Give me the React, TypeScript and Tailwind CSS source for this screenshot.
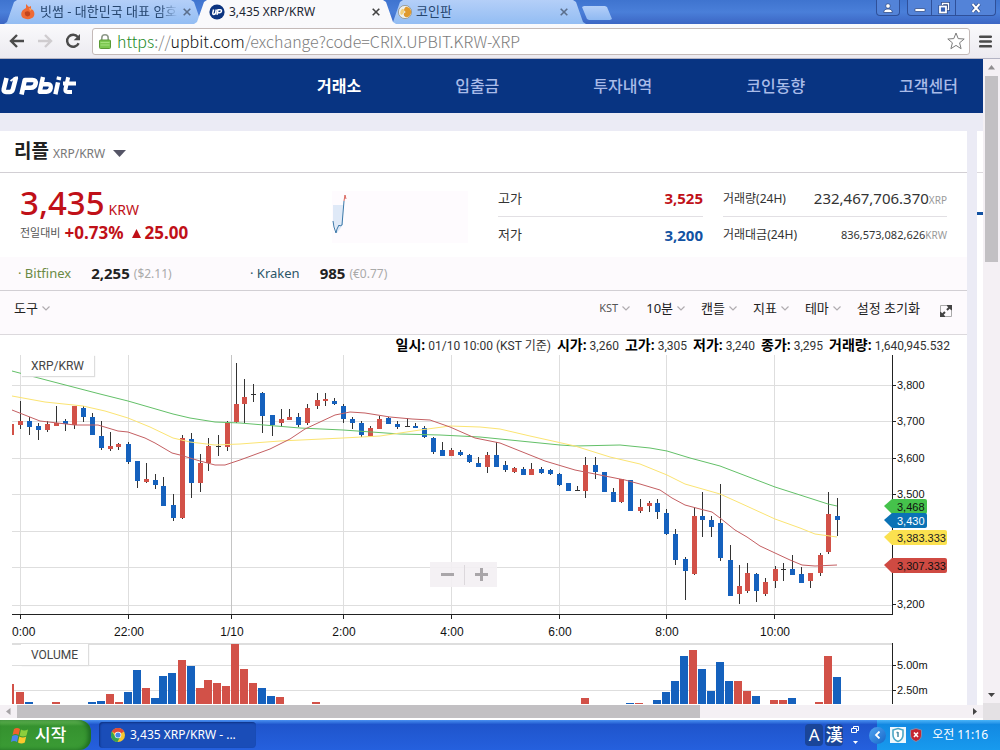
import React from "react";

type Candle = [x: number, high: number, low: number, top: number, bottom: number, kind: "r" | "b" | "d"];

const RED = "#d25148";
const BLUE = "#1561bd";

const candles: Candle[] = [
  [20, 401, 429, 421, 425, "r"], [29, 417, 435, 421, 427, "b"], [38, 423, 440, 426, 430, "b"],
  [47, 421, 432, 424, 430, "r"], [56, 406, 426, 423, 426, "r"], [65, 419, 431, 421, 424, "b"],
  [74, 406, 429, 406, 425, "r"], [83, 406, 422, 408, 417, "b"], [92, 413, 435, 417, 435, "b"],
  [101, 421, 450, 436, 448, "b"], [110, 432, 451, 446, 449, "r"], [118, 443, 450, 444, 447, "r"],
  [128, 442, 464, 444, 462, "b"], [137, 461, 488, 461, 481, "b"], [146, 463, 483, 479, 482, "r"],
  [155, 474, 489, 480, 485, "b"], [163, 477, 506, 486, 506, "b"], [173, 494, 521, 505, 518, "b"],
  [182, 435, 519, 438, 518, "r"], [191, 433, 498, 439, 483, "b"], [200, 454, 492, 463, 483, "r"],
  [208, 438, 471, 446, 463, "r"], [218, 435, 456, 446, 447, "d"], [227, 421, 451, 423, 447, "r"],
  [236, 363, 423, 404, 422, "r"], [244, 379, 423, 397, 404, "r"], [253, 384, 402, 394, 395, "d"],
  [262, 392, 433, 393, 416, "b"], [272, 415, 436, 415, 425, "b"], [281, 409, 427, 419, 423, "r"],
  [289, 409, 420, 417, 420, "r"], [298, 413, 427, 417, 425, "b"], [307, 404, 425, 408, 423, "r"],
  [317, 393, 409, 400, 406, "r"], [325, 393, 406, 399, 401, "r"], [334, 398, 405, 401, 404, "b"],
  [343, 404, 423, 406, 419, "b"], [352, 417, 429, 419, 423, "b"], [361, 421, 437, 423, 435, "b"],
  [370, 426, 436, 428, 436, "r"], [379, 416, 429, 419, 429, "r"], [388, 417, 424, 418, 424, "b"],
  [397, 421, 429, 424, 427, "b"], [407, 418, 427, 426, 427, "d"], [415, 423, 428, 426, 428, "b"],
  [424, 426, 438, 428, 437, "b"], [433, 437, 454, 438, 452, "b"], [442, 442, 456, 450, 456, "b"],
  [451, 448, 456, 450, 456, "r"], [460, 450, 456, 452, 455, "b"], [469, 454, 463, 455, 462, "b"],
  [478, 457, 467, 463, 467, "b"], [487, 452, 473, 455, 467, "r"], [496, 442, 467, 455, 467, "b"],
  [505, 461, 472, 465, 470, "b"], [514, 467, 473, 468, 472, "r"], [523, 467, 475, 469, 475, "b"],
  [531, 463, 475, 469, 475, "r"], [541, 467, 474, 469, 473, "b"], [550, 469, 475, 470, 474, "b"],
  [559, 473, 486, 474, 485, "b"], [568, 483, 491, 483, 491, "b"], [577, 486, 491, 490, 491, "d"],
  [585, 457, 498, 465, 491, "r"], [595, 457, 479, 465, 472, "b"], [604, 472, 492, 472, 492, "b"],
  [613, 488, 502, 492, 502, "b"], [621, 479, 503, 479, 502, "r"], [630, 480, 511, 480, 511, "b"],
  [640, 499, 513, 507, 511, "r"], [649, 501, 512, 503, 506, "r"], [657, 499, 519, 503, 512, "b"],
  [666, 509, 535, 513, 534, "b"], [675, 529, 565, 534, 560, "b"], [685, 557, 600, 559, 571, "b"],
  [694, 507, 575, 516, 574, "r"], [702, 492, 537, 516, 520, "b"], [711, 516, 537, 520, 527, "b"],
  [720, 484, 561, 523, 558, "b"], [730, 545, 596, 560, 596, "b"], [739, 565, 604, 586, 594, "r"],
  [747, 563, 593, 573, 591, "r"], [756, 573, 602, 574, 591, "b"], [765, 578, 596, 582, 594, "r"],
  [775, 566, 588, 569, 581, "r"], [783, 563, 581, 569, 570, "d"], [792, 555, 575, 569, 575, "b"],
  [801, 567, 583, 574, 583, "b"], [810, 573, 588, 573, 581, "r"], [820, 553, 576, 555, 573, "r"],
  [828, 492, 554, 514, 552, "r"], [837, 498, 536, 516, 520, "b"],
];

const volumes: [x: number, top: number, kind: "r" | "b"][] = [
  [16, 692, "r"], [25, 702, "b"], [52, 702, "r"], [88, 702, "b"], [97, 701, "b"], [106, 694, "r"],
  [115, 702, "r"], [124, 692, "b"], [133, 670, "b"], [142, 688, "r"], [151, 698, "b"], [159, 676, "b"],
  [168, 673, "b"], [178, 660, "r"], [187, 666, "b"], [196, 688, "r"], [204, 680, "r"], [213, 683, "r"],
  [222, 686, "r"], [231, 644, "r"], [240, 669, "r"], [249, 683, "r"], [258, 688, "b"], [267, 696, "b"],
  [276, 697, "r"], [312, 702, "r"], [581, 698, "r"], [626, 703, "b"], [635, 703, "r"], [653, 700, "b"],
  [662, 692, "b"], [671, 681, "b"], [680, 656, "b"], [689, 650, "r"], [698, 669, "b"], [707, 691, "b"],
  [716, 662, "b"], [725, 681, "b"], [734, 681, "r"], [743, 691, "r"], [752, 696, "b"], [770, 700, "r"],
  [779, 700, "r"], [788, 698, "b"], [815, 702, "r"], [824, 656, "r"], [833, 677, "b"],
];

const GREEN_LINE = "12,371 50,381 100,394 128,401 173,414 190,418 215,422 240,423 300,428 343,430 400,434 440,435 480,437 520,441 560,445 575,446 620,445 650,448 667,451 690,458 720,466 775,487 800,495 828,504 837,506";
const YELLOW_LINE = "12,396 45,402 83,406 105,411 128,418 150,427 173,438 190,442 215,445 240,444 280,441 343,438 380,436 420,430 450,426 480,427 500,429 530,436 575,446 610,457 640,464 667,475 685,484 720,494 740,503 775,519 800,528 815,534 837,537";
const RED_LINE = "12,410 40,421 75,425 98,425 118,431 128,432 145,438 155,443 172,453 180,455 200,461 215,465 225,465 240,460 270,449 290,439 305,429 320,422 335,415 350,412 365,413 390,417 412,419 430,420 450,427 475,438 500,443 520,451 545,461 575,470 600,475 625,480 640,484 660,490 672,498 685,505 700,509 712,512 720,518 735,530 747,537 760,546 775,553 790,560 802,565 815,566 837,565";

const timeTicks: [number, string][] = [
  [20, "0:00"], [128, "22:00"], [231, "1/10"], [343, "2:00"], [451, "4:00"], [559, "6:00"], [666, "8:00"], [774, "10:00"],
];
const priceTicks: [number, string][] = [
  [385, "3,800"], [421, "3,700"], [458, "3,600"], [494, "3,500"], [604, "3,200"],
];
const priceTags: { y: number; w: number; fill: string; color: string; text: string }[] = [
  { y: 499, w: 32, fill: "#45c24b", color: "#111", text: "3,468" },
  { y: 513, w: 32, fill: "#0b72b5", color: "#fff", text: "3,430" },
  { y: 530, w: 52, fill: "#fbe14f", color: "#222", text: "3,383.333" },
  { y: 558, w: 52, fill: "#cf4a42", color: "#111", text: "3,307.333" },
];

function Chart() {
  const sans = '"Liberation Sans", Arial, sans-serif';
  return (
    <svg viewBox="0 355 967 351" className="block w-full" role="img" aria-label="XRP/KRW">
      <g stroke="#dedede" shapeRendering="crispEdges">
        {[385, 421, 458, 494, 531, 567, 605].map((y) => (
          <line key={y} x1={12} x2={892} y1={y + 0.5} y2={y + 0.5} />
        ))}
        {timeTicks.map(([x]) => (
          <line key={x} x1={x + 0.5} x2={x + 0.5} y1={355} y2={614} stroke={x === 231 ? "#c4c4c4" : "#dedede"} />
        ))}
        <line x1={12} x2={892} y1={643.5} y2={643.5} strokeWidth={2} />
        <line x1={12} x2={892} y1={665.5} y2={665.5} />
        <line x1={12} x2={892} y1={690.5} y2={690.5} />
      </g>

      <g shapeRendering="crispEdges">
        <rect x={12} y={424} width={2} height={11} fill={RED} />
        {candles.map(([x, high, low, top, bottom, kind]) => (
          <g key={x}>
            <rect x={x} y={high} width={1} height={low - high} fill="#333" />
            <rect
              x={x - 2}
              y={top}
              width={5}
              height={Math.max(1, bottom - top)}
              fill={kind === "r" ? RED : kind === "b" ? BLUE : "#333"}
            />
          </g>
        ))}
        <rect x={12} y={684} width={2} height={20} fill={RED} />
        {volumes.map(([x, top, kind]) => (
          <rect key={x} x={x} y={top} width={8} height={704 - top} fill={kind === "r" ? RED : BLUE} />
        ))}
      </g>

      <g fill="none" strokeWidth={1} strokeLinejoin="round">
        <polyline points={GREEN_LINE} stroke="#63c068" />
        <polyline points={YELLOW_LINE} stroke="#fbe472" />
        <polyline points={RED_LINE} stroke="#c45f62" />
      </g>

      <g stroke="#222" shapeRendering="crispEdges">
        <line x1={12} x2={893} y1={614.5} y2={614.5} />
        <line x1={892} x2={892} y1={355} y2={615} />
        <line x1={892} x2={892} y1={643} y2={704} />
        {timeTicks.map(([x]) => (
          <line key={x} x1={x + 0.5} x2={x + 0.5} y1={615} y2={619} />
        ))}
        {[...priceTicks.map(([y]) => y), 665, 690].map((y) => (
          <line key={y} x1={892} x2={896} y1={y + 0.5} y2={y + 0.5} />
        ))}
      </g>

      <g fontFamily={sans} fill="#111">
        {timeTicks.map(([x, t], i) => (
          <text key={x} x={i === 0 ? 12 : x + 1} y={636} fontSize={12} textAnchor={i === 0 ? "start" : "middle"}>
            {t}
          </text>
        ))}
        {priceTicks.map(([y, t]) => (
          <text key={y} x={897} y={y + 4} fontSize={11}>{t}</text>
        ))}
        <text x={897} y={669} fontSize={11}>5.00m</text>
        <text x={897} y={694} fontSize={11}>2.50m</text>
        {priceTags.map((tag) => (
          <g key={tag.text}>
            <path
              d={`M884 ${tag.y + 7} L892 ${tag.y} H${893 + tag.w} q2 0 2 2 V${tag.y + 13} q0 2 -2 2 H892 Z`}
              fill={tag.fill}
            />
            <text x={897} y={tag.y + 12} fontSize={11} fill={tag.color}>{tag.text}</text>
          </g>
        ))}
      </g>
    </svg>
  );
}

function Chevron() {
  return (
    <svg viewBox="0 0 8 5" className="h-[5px] w-2" aria-hidden="true">
      <path d="M0.5 0.5 L4 4 L7.5 0.5" fill="none" stroke="#b0acb0" strokeWidth="1.2" />
    </svg>
  );
}

function Cross({ color = "#5b6f8c" }: { color?: string }) {
  return (
    <svg viewBox="0 0 8 8" className="size-2" aria-hidden="true">
      <path d="M0.7 0.7 L7.3 7.3 M7.3 0.7 L0.7 7.3" stroke={color} strokeWidth="1.6" />
    </svg>
  );
}

const tabShape =
  "h-6 flex items-center [clip-path:polygon(0_100%,3px_92%,10px_8%,13px_0,calc(100%-13px)_0,calc(100%-10px)_8%,calc(100%-3px)_92%,100%_100%)]";

function TabStrip() {
  return (
    <header className="flex h-6 shrink-0 items-end bg-linear-to-b from-[#3f74cf] via-[#4a7fd9] to-[#3c66c4] pl-1">
      <div className={tabShape + " w-[200px] gap-[5px] bg-linear-to-b from-[#b4cff8] to-[#93bdf3] pr-3 pl-[17px] text-[#26466f]"}>
        <svg viewBox="0 0 14 16" className="h-4 w-[14px] shrink-0" aria-hidden="true">
          <path d="M5 0 L8 3 L10 2 L10 5 C13 6 14 9 13 12 C11 16 4 16 1 13 C-1 9 1 6 5 4 Z" fill="#ee6a35" />
          <path d="M4 8 C7 6 10 8 9 11 C7 14 3 12 4 8Z" fill="#c2451d" />
          <path d="M8 4 L11 5 L9 7Z" fill="#f9a55d" />
        </svg>
        <button type="button" className="h-6 w-[138px] overflow-hidden text-left text-[13px] whitespace-nowrap [mask-image:linear-gradient(to_right,#000_120px,transparent)]">
          빗썸 - 대한민국 대표 암호
        </button>
        <button type="button" aria-label="탭 닫기" className="shrink-0"><Cross /></button>
      </div>
      <div className={tabShape + " z-10 -ml-[10px] w-[202px] gap-1 bg-[#f9f9fb] pr-4 pl-[15px] text-[#1d2733]"}>
        <svg viewBox="0 0 16 16" className="size-4 shrink-0" aria-hidden="true">
          <circle cx="8" cy="8" r="7.6" fill="#0c3480" />
          <path d="M4.6 5.5 L3.8 9 Q3.6 10.4 4.8 10.4 Q6.3 10.4 6.6 9 L7.3 5.5 M8 10.8 L9 5.8 H11.3 Q12.8 5.8 12.4 7.3 Q12.1 8.7 10.5 8.7 H8.6" fill="none" stroke="#fff" strokeWidth="1.5" />
        </svg>
        <button type="button" className="h-6 grow text-left text-[12px] whitespace-nowrap">3,435 XRP/KRW</button>
        <button type="button" aria-label="탭 닫기"><Cross color="#444" /></button>
      </div>
      <div className={tabShape + " -ml-[6px] w-[196px] gap-1 bg-linear-to-b from-[#b4cff8] to-[#93bdf3] pr-[18px] pl-2 text-[#26466f]"}>
        <svg viewBox="0 0 14 14" className="size-[14px] shrink-0" aria-hidden="true">
          <circle cx="7" cy="7" r="6.6" fill="#eef0ee" stroke="#8c8570" strokeWidth="0.7" />
          <path d="M8 1.8 A5.2 5.2 0 0 1 8 12.2 C5 11 5 8 8 7 C5 6 6 3 8 1.8Z" fill="#e09a2d" />
          <path d="M4 4 Q6 3 6 6 T3 10 Q1 7 4 4" fill="#f3cf7a" />
        </svg>
        <button type="button" className="h-6 grow text-left text-[13px] whitespace-nowrap">코인판</button>
        <button type="button" aria-label="탭 닫기"><Cross /></button>
      </div>
      <button
        type="button"
        aria-label="새 탭"
        className="mb-1 -ml-1 h-[14px] w-[30px] bg-linear-to-b from-[#b4cff8] to-[#8fb9f2] [clip-path:polygon(0_8%,2px_0,23px_0,25px_8%,100%_92%,28px_100%,7px_100%,5px_92%)]"
      />
      <div className="mr-1 ml-auto flex h-full items-start gap-[7px]">
        <button type="button" aria-label="사용자" className="flex h-4 w-6 items-center justify-center rounded-b border border-t-0 border-[#2f5099] bg-[#5383d8]">
          <svg viewBox="0 0 10 10" className="size-[10px]" aria-hidden="true">
            <circle cx="5" cy="3" r="2.3" fill="#fff" stroke="#24417d" strokeWidth="0.7" />
            <path d="M0.7 9.5 Q0.7 6 5 6 Q9.3 6 9.3 9.5Z" fill="#fff" stroke="#24417d" strokeWidth="0.7" />
          </svg>
        </button>
        <div className="flex h-4 divide-x divide-[#2f5099] rounded-b border border-t-0 border-[#2f5099] bg-[#5383d8]">
          <button type="button" aria-label="최소화" className="flex w-6 items-center justify-center">
            <svg viewBox="0 0 12 8" className="h-2 w-3" aria-hidden="true"><rect x="1" y="4.5" width="10" height="3" rx="0.5" fill="#fff" stroke="#24417d" strokeWidth="0.7" /></svg>
          </button>
          <button type="button" aria-label="이전 크기로 복원" className="flex w-6 items-center justify-center">
            <svg viewBox="0 0 12 12" className="size-3" aria-hidden="true">
              <path d="M4.5 4 V1.5 H10.5 V7.5 H8" fill="none" stroke="#24417d" strokeWidth="2.8" />
              <path d="M4.5 3 V1.5 H10.5 V7.5 H9" fill="none" stroke="#fff" strokeWidth="1.4" />
              <rect x="2" y="4.5" width="6" height="6" fill="#3762b5" stroke="#24417d" strokeWidth="3" />
              <rect x="2" y="4.5" width="6" height="6" fill="#3762b5" stroke="#fff" strokeWidth="1.8" />
            </svg>
          </button>
          <button type="button" aria-label="닫기" className="flex w-[39px] items-center justify-center">
            <svg viewBox="0 0 10 10" className="size-[10px]" aria-hidden="true">
              <path d="M1.5 1 L8.5 9 M8.5 1 L1.5 9" stroke="#24417d" strokeWidth="3.4" />
              <path d="M1.5 1 L8.5 9 M8.5 1 L1.5 9" stroke="#fff" strokeWidth="2" />
            </svg>
          </button>
        </div>
      </div>
    </header>
  );
}

function Toolbar() {
  return (
    <div className="flex h-[35px] shrink-0 items-center border-b border-[#b4b4c4] bg-linear-to-b from-[#fafafc] to-[#eceaf0] pr-2 pl-[9px]">
      <button type="button" aria-label="뒤로">
        <svg viewBox="0 0 16 14" className="h-[14px] w-4" aria-hidden="true">
          <path d="M15 7 H2.5 M8 1 L2 7 L8 13" fill="none" stroke="#4b4b4b" strokeWidth="2.4" />
        </svg>
      </button>
      <button type="button" aria-label="앞으로" className="ml-3">
        <svg viewBox="0 0 16 14" className="h-[14px] w-4" aria-hidden="true">
          <path d="M1 7 H13.5 M8 1 L14 7 L8 13" fill="none" stroke="#cfcccf" strokeWidth="2.4" />
        </svg>
      </button>
      <button type="button" aria-label="새로고침" className="ml-3">
        <svg viewBox="0 0 16 16" className="size-4" aria-hidden="true">
          <path d="M12.8 4 A6 6 0 1 0 13.6 10.2" fill="none" stroke="#4b4b4b" strokeWidth="2.4" />
          <path d="M15 1 V7.3 H8.7 Z" fill="#4b4b4b" />
        </svg>
      </button>
      <div className="ml-[11px] flex h-[27px] grow items-center rounded-[3px] border border-[#c4bab8] bg-white pr-1 pl-[6px]">
        <svg viewBox="0 0 12 15" className="h-[15px] w-3 shrink-0" aria-hidden="true">
          <path d="M2.8 7 V4 A3.2 3.2 0 0 1 9.2 4 V7" fill="none" stroke="#8f9a8a" strokeWidth="1.6" />
          <rect x="0.5" y="6" width="11" height="8.5" rx="1" fill="#7cc850" stroke="#5a9a35" />
          <path d="M1.5 8.5 H10.5 M1.5 11 H10.5" stroke="#a4e07c" />
        </svg>
        <div role="textbox" aria-label="주소" tabIndex={0} className="ml-[6px] grow font-['Noto_Sans_CJK_KR',sans-serif] text-[16px] leading-5 font-light whitespace-nowrap text-[#7c7c7c]">
          <span className="text-[#1e8a26]">https</span>://<span className="text-[#111]">upbit.com</span>/exchange?code=CRIX.UPBIT.KRW-XRP
        </div>
        <button type="button" aria-label="북마크">
          <svg viewBox="0 0 18 18" className="size-[18px]" aria-hidden="true">
            <path d="M9 1 L11.2 6.6 L17.2 7 L12.6 10.8 L14.1 16.7 L9 13.4 L3.9 16.7 L5.4 10.8 L0.8 7 L6.8 6.6 Z" fill="#fff" stroke="#7b7b7b" strokeLinejoin="round" />
          </svg>
        </button>
      </div>
      <button type="button" aria-label="메뉴" className="ml-[9px]">
        <svg viewBox="0 0 13 13" className="size-[13px]" aria-hidden="true">
          <path d="M1.2 1.7 H11.8 M1.2 6.5 H11.8 M1.2 11.3 H11.8" stroke="#4b4b4b" strokeWidth="2.6" strokeLinecap="round" />
        </svg>
      </button>
    </div>
  );
}

function SiteHeader() {
  return (
    <div className="flex h-[54px] shrink-0 items-center justify-between bg-[#083482] pr-[25px]">
      <a href="#home" aria-label="UPbit">
        <svg viewBox="0 0 76 20" className="h-5 w-[76px]" aria-hidden="true">
          <g fill="none" stroke="#fff" strokeWidth="4" strokeLinejoin="round">
            <path d="M6.5 2 L3.8 13 Q3.2 16 6 16 H9.5 Q12.2 16 13 13 L16 1.5" strokeWidth="4.6" />
            <path d="M10.5 5 L15.5 1.5 H18" strokeWidth="2" />
            <path d="M21.5 18.5 L24.8 4 H32.5 Q36.4 4 35.6 7.8 Q34.8 11.8 30.5 11.8 H24.5" strokeWidth="4.6" />
            <path d="M43 1 L39.7 15.8 H46.5 Q50 15.8 50.7 12.2 Q51.3 8.2 48 8.2 H42.5" strokeWidth="4.4" />
            <path d="M58 6.4 L55.4 18.2" strokeWidth="4.4" />
            <path d="M59.2 0.8 L58.5 4" strokeWidth="4.4" />
            <path d="M68.2 1.2 L65.4 13.3 Q65 16 67.5 16 H72 M63 7.4 H76" />
          </g>
        </svg>
      </a>
      <nav className="flex gap-[94px] text-[16px] font-medium text-[#a9bbe8]">
        <a href="#exchange" className="font-bold text-white">거래소</a>
        <a href="#balances">입출금</a>
        <a href="#investments">투자내역</a>
        <a href="#trends">코인동향</a>
        <a href="#support">고객센터</a>
      </nav>
    </div>
  );
}

function Menu({ children }: { children: React.ReactNode }) {
  return (
    <button type="button" className="flex items-center gap-1 whitespace-nowrap">
      {children}
      <Chevron />
    </button>
  );
}

function Legend({ name, value }: { name: string; value: string }) {
  return (
    <span className="leading-5">
      <b className="text-[14px] text-black">{name}:</b> {value}
    </span>
  );
}

function Market() {
  return (
    <section className="min-w-0 grow bg-white">
      <div className="flex h-[42px] items-center border-b border-[#d2cfd4] pl-[14px]">
        <h1 className="text-[19px] font-bold text-[#222]">리플</h1>
        <span className="mt-1 ml-1 text-[12px] text-[#777]">XRP/KRW</span>
        <button type="button" aria-label="마켓 선택" className="mt-1 ml-2">
          <svg viewBox="0 0 13 7" className="h-[7px] w-[13px]" aria-hidden="true"><path d="M0 0 H13 L6.5 7Z" fill="#555566" /></svg>
        </button>
      </div>

      <div className="flex h-[84px] pr-5 pl-5">
        <div className="w-[312px] shrink-0 pt-3 text-[#c01018]">
          <p className="flex items-baseline gap-1 leading-9">
            <span className="text-[33px] font-medium">3,435</span>
            <span className="text-[14px] leading-none">KRW</span>
          </p>
          <p className="flex items-center text-[17px] leading-6 font-bold">
            <span className="mr-1 text-[11px] font-normal text-[#555]">전일대비</span>
            +0.73%
            <svg viewBox="0 0 9 9" className="mr-1 ml-2 size-[9px]" aria-hidden="true"><path d="M4.5 0 L9 9 H0Z" fill="#c01018" /></svg>
            25.00
          </p>
        </div>
        <div className="mt-[18px] h-[52px] w-[136px] shrink-0 bg-[#fefbfe]">
          <svg viewBox="0 0 136 52" className="h-[52px] w-[136px]" aria-hidden="true">
            <path d="M1 14 H11 V34 L5 42 L1 30Z" fill="#dfe9f7" />
            <path d="M1 30 L2 36 L4 42 L5 38 L7 34 L8 35 L10 34 L11 22 L12 10" fill="none" stroke="#3b78a8" />
            <path d="M12 10 L13 4 L14 8" fill="none" stroke="#d9665e" />
          </svg>
        </div>
        <dl className="mt-2 ml-[30px] w-[205px] shrink-0 text-[13px] text-[#333]">
          <div className="flex h-9 items-center justify-between border-b border-[#e2e0e4]">
            <dt>고가</dt>
            <dd className="text-[15px] font-bold text-[#c01018]">3,525</dd>
          </div>
          <div className="flex h-9 items-center justify-between">
            <dt>저가</dt>
            <dd className="text-[15px] font-bold text-[#1252a2]">3,200</dd>
          </div>
        </dl>
        <dl className="mt-2 ml-5 grow text-[12px] whitespace-nowrap text-[#333]">
          <div className="flex h-9 items-center justify-between border-b border-[#e2e0e4]">
            <dt>거래량(24H)</dt>
            <dd className="text-[15px]">232,467,706.370<span className="text-[10px] text-[#999]">XRP</span></dd>
          </div>
          <div className="flex h-9 items-center justify-between">
            <dt>거래대금(24H)</dt>
            <dd className="text-[11px]">836,573,082,626<span className="text-[10px] text-[#999]">KRW</span></dd>
          </div>
        </dl>
      </div>

      <div className="flex h-[34px] items-center border-b border-[#d2cfd4] bg-[#fdfafd] pl-[18px] text-[13px]">
        <div className="flex w-[232px] items-center">
          <span className="text-[#6b8a45]">· Bitfinex</span>
          <b className="ml-5 text-[15px] font-bold text-[#222]">2,255</b>
          <span className="ml-1 text-[12px] text-[#aaa]">($2.11)</span>
        </div>
        <div className="flex items-center">
          <span className="text-[#2c5668]">· Kraken</span>
          <b className="ml-5 text-[15px] font-bold text-[#222]">985</b>
          <span className="ml-1 text-[12px] text-[#aaa]">(€0.77)</span>
        </div>
      </div>

      <div className="flex h-11 items-center justify-between border-b border-[#dcd9dd] bg-[#fdfafd] pr-[15px] pb-2 pl-[14px] text-[13px] text-[#222]">
        <Menu>도구</Menu>
        <div className="flex items-center gap-4">
          <Menu><span className="text-[11px] text-[#555]">KST</span></Menu>
          <Menu>10분</Menu>
          <Menu>캔들</Menu>
          <Menu>지표</Menu>
          <Menu>테마</Menu>
          <button type="button">설정 초기화</button>
          <button type="button" aria-label="전체 화면" className="mt-1 ml-1">
            <svg viewBox="0 0 12 12" className="size-3" aria-hidden="true">
              <path d="M0.5 6 V0.5 H6 M6 11.5 H11.5 V6" fill="none" stroke="#aaa" />
              <path d="M2 10 L10 2" stroke="#444" strokeWidth="2" strokeDasharray="4.2 2.8" />
              <path d="M6 0 H12 V6Z M0 6 V12 H6Z" fill="#444" />
            </svg>
          </button>
        </div>
      </div>

      <p className="flex h-5 items-center justify-end gap-[6px] pr-[17px] font-['Roboto','Noto_Sans_CJK_KR',sans-serif] text-[12px] whitespace-nowrap text-[#333]">
        <Legend name="일시" value="01/10 10:00 (KST 기준)" />
        <Legend name="시가" value="3,260" />
        <Legend name="고가" value="3,305" />
        <Legend name="저가" value="3,240" />
        <Legend name="종가" value="3,295" />
        <Legend name="거래량" value="1,640,945.532" />
      </p>

      <div className="relative">
        <Chart />
        <span className="absolute top-0 left-[21px] flex h-[21px] items-center bg-white px-[10px] font-['Roboto',sans-serif] text-[12px] text-[#444] shadow-[1px_1px_1px_#ddd]">XRP/KRW</span>
        <span className="absolute top-[289px] left-[21px] flex h-[21px] items-center bg-white px-[10px] font-['Roboto',sans-serif] text-[12px] text-[#444] shadow-[1px_1px_1px_#ddd]">VOLUME</span>
        <div className="absolute top-[207px] left-[430px] flex h-[25px] items-center divide-x divide-[#dcd8dc] bg-[#f3f0f3]/90">
          <button type="button" aria-label="축소" className="flex h-5 w-[35px] items-center justify-center">
            <svg viewBox="0 0 13 13" className="size-[13px]" aria-hidden="true"><path d="M0 6.5 H13" stroke="#a9a6a9" strokeWidth="3" /></svg>
          </button>
          <button type="button" aria-label="확대" className="flex h-5 w-8 items-center justify-center">
            <svg viewBox="0 0 13 13" className="size-[13px]" aria-hidden="true"><path d="M0 6.5 H13 M6.5 0 V13" stroke="#a9a6a9" strokeWidth="3" /></svg>
          </button>
        </div>
      </div>
    </section>
  );
}

function Arrow({ d, color }: { d: string; color: string }) {
  return (
    <svg viewBox="0 0 7 7" className="size-[7px]" aria-hidden="true"><path d={d} fill={color} /></svg>
  );
}

function Taskbar() {
  return (
    <footer className="flex h-[30px] shrink-0 items-stretch bg-linear-to-b from-[#4a90f0] via-[#1f55cc] via-15% to-[#2560de] text-white">
      <button type="button" className="flex w-[91px] items-center gap-[6px] rounded-r-xl bg-linear-to-b from-[#6cc05c] via-[#35922f] via-20% to-[#3b9c35] pl-[11px] text-[17px] font-medium shadow-[inset_-3px_0_4px_#1d6a22]">
        <svg viewBox="0 0 18 17" className="h-[17px] w-[18px]" aria-hidden="true">
          <path d="M3 2 Q6 0 9 2 L7.6 8 Q4.5 6 1.5 8Z" fill="#f0622d" />
          <path d="M10 2.5 Q13 4.5 17 2.5 L15.5 8.5 Q12 10.5 8.6 8.5Z" fill="#8ccf3c" />
          <path d="M1.2 9 Q4.5 7.2 7.3 9 L6 15 Q3 13 0 15Z" fill="#4a86ec" />
          <path d="M8.3 9.5 Q12 11.5 15.2 9.5 L13.8 15.5 Q10.5 17.5 7 15.5Z" fill="#fbc92d" />
        </svg>
        시작
      </button>
      <button type="button" className="my-[2px] ml-2 flex w-[157px] items-center gap-[5px] rounded-sm bg-[#1a4db8] pl-3 text-[12px] whitespace-nowrap shadow-[inset_1px_1px_2px_#0e3283]">
        <svg viewBox="0 0 14 14" className="size-[14px] shrink-0" aria-hidden="true">
          <circle cx="7" cy="7" r="7" fill="#f6c62f" />
          <path d="M7 7 L0.9 3.5 A7 7 0 0 1 13.1 3.5 Z" fill="#e04a38" />
          <path d="M0.9 3.5 A7 7 0 0 0 6.5 14 L9 9 L4 8Z" fill="#36a350" />
          <circle cx="7" cy="7" r="3.3" fill="#fff" />
          <circle cx="7" cy="7" r="2.6" fill="#4a86e8" />
        </svg>
        3,435 XRP/KRW - ...
      </button>
      <div className="ml-auto flex items-center">
        <button type="button" aria-label="영문" className="flex h-[22px] w-[18px] items-center justify-center rounded-sm bg-[#1a4598] text-[17px] leading-5">A</button>
        <button type="button" aria-label="한자" className="ml-[2px] flex h-[22px] w-[18px] items-center justify-center rounded-sm bg-[#1a4598] text-[17px] leading-5 font-medium">漢</button>
        <div className="mr-[18px] ml-2 flex flex-col items-center gap-2">
          <svg viewBox="0 0 8 7" className="h-[7px] w-2" aria-hidden="true"><path d="M2.5 2 V0.5 H7.5 V4.5 H6 M0.5 2.5 H5.5 V6.5 H0.5Z" fill="none" stroke="#fff" /></svg>
          <svg viewBox="0 0 5 3" className="h-[3px] w-[5px]" aria-hidden="true"><path d="M0 0 H5 L2.5 3Z" fill="#fff" /></svg>
        </div>
        <div className="flex h-full items-center bg-linear-to-b from-[#4ab4f8] via-[#1289e2] via-15% to-[#189aee] pr-3">
          <button type="button" aria-label="숨겨진 아이콘 표시" className="-ml-2 flex size-[17px] items-center justify-center rounded-full bg-linear-to-br from-[#4fa5f2] to-[#1466c8]">
            <svg viewBox="0 0 7 8" className="h-2 w-[7px]" aria-hidden="true"><path d="M5.5 0.5 L2 4 L5.5 7.5" fill="none" stroke="#fff" strokeWidth="1.8" /></svg>
          </button>
          <svg viewBox="0 0 16 16" className="ml-1 size-4" aria-hidden="true">
            <rect width="16" height="16" fill="#eef7fd" />
            <path d="M8 1.5 L13 3 V8 Q13 12.5 8 14.5 Q3 12.5 3 8 V3Z" fill="#fff" stroke="#4ba6c6" strokeWidth="1.6" />
            <path d="M8 5 V10 M6.5 5.5 H8" stroke="#4b8ba6" strokeWidth="1.5" />
          </svg>
          <svg viewBox="0 0 12 14" className="ml-1 h-[14px] w-3" aria-hidden="true">
            <path d="M6 0.5 L11.5 2 V7 Q11.5 11.5 6 13.5 Q0.5 11.5 0.5 7 V2Z" fill="#c52531" stroke="#7b8fb0" />
            <path d="M4 4.5 L8 9 M8 4.5 L4 9" stroke="#fff" strokeWidth="1.6" />
          </svg>
          <time className="ml-[10px] text-[12px] whitespace-nowrap">오전 11:16</time>
        </div>
      </div>
    </footer>
  );
}

export default function App() {
  return (
    <div className="flex h-screen flex-col overflow-hidden bg-white font-['Noto_Sans','Noto_Sans_CJK_KR',sans-serif]">
      <TabStrip />
      <Toolbar />
      <main className="flex min-h-0 grow">
        <div className="flex min-w-0 grow flex-col">
          <div className="flex min-h-0 grow flex-col overflow-hidden bg-[#ebebf5]">
            <SiteHeader />
            <div className="mt-[18px] flex min-h-0 grow gap-[10px]">
              <Market />
              <aside className="w-[6px] shrink-0 bg-white">
                <div className="h-[42px] border-b border-[#dcd9dd]" />
                <div className="mt-[39px] h-[3px] bg-[#1252a2]" />
              </aside>
            </div>
          </div>
          <div className="flex h-[15px] shrink-0 items-center border-b-2 border-white bg-[#f4f0f4]">
            <div className="flex w-[17px] shrink-0 justify-center"><Arrow d="M5.5 0 V7 L1 3.5Z" color="#a5a2a5" /></div>
            <div className="h-full w-[683px] bg-[#c2c0c3]" />
            <div className="ml-auto flex w-[17px] shrink-0 justify-center"><Arrow d="M2 0 V7 L6 3.5Z" color="#444" /></div>
          </div>
        </div>
        <div className="flex w-[17px] shrink-0 flex-col items-center bg-[#f4f0f4]">
          <div className="flex h-[17px] shrink-0 items-center"><Arrow d="M0 5.5 H7 L3.5 1Z" color="#908d90" /></div>
          <div className="h-[186px] w-[13px] bg-[#c2c0c3]" />
          <div className="mt-auto flex h-[17px] shrink-0 items-center"><Arrow d="M0 2 H7 L3.5 6Z" color="#444" /></div>
          <div className="h-[17px] w-full shrink-0 bg-[#e4e1e4]" />
        </div>
      </main>
      <Taskbar />
    </div>
  );
}
